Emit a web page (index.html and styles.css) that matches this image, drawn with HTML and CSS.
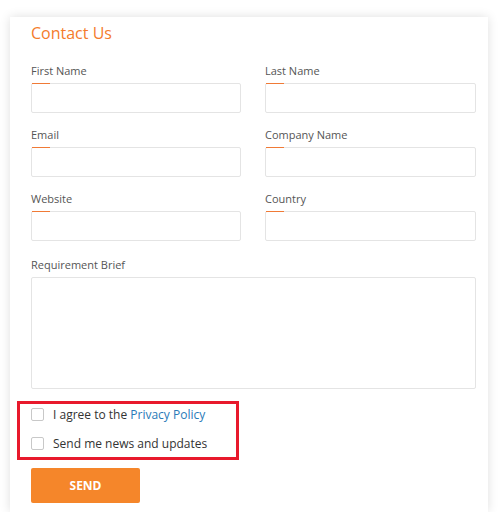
FILE: index.html
```html
<!DOCTYPE html>
<html lang="en">
<head>
    <meta charset="UTF-8">
    <meta name="viewport" content="width=device-width, initial-scale=1.0">
    <title>Contact Us</title>
    <link rel="stylesheet" href="styles.css">
</head>
<body>
    <div class="card">
        <h2 class="title">Contact Us</h2>
        <form class="form">
            <div class="grid">
                <div class="field">
                    <label>First Name</label>
                    <input type="text">
                </div>
                <div class="field">
                    <label>Last Name</label>
                    <input type="text">
                </div>
                <div class="field">
                    <label>Email</label>
                    <input type="text">
                </div>
                <div class="field">
                    <label>Company Name</label>
                    <input type="text">
                </div>
                <div class="field">
                    <label>Website</label>
                    <input type="text">
                </div>
                <div class="field">
                    <label>Country</label>
                    <input type="text">
                </div>
            </div>
            <div class="field brief">
                <label>Requirement Brief</label>
                <textarea></textarea>
            </div>
            <div class="consent">
                <label class="check"><span class="box"></span>I agree to the&nbsp;<a href="#">Privacy Policy</a></label>
                <label class="check"><span class="box"></span>Send me news and updates</label>
            </div>
            <button type="button" class="send">SEND</button>
        </form>
    </div>
</body>
</html>
```

FILE: styles.css
```css
* {
    box-sizing: border-box;
}
body {
    margin: 0;
    background: #fff;
    font-family: 'Open Sans', Arial, sans-serif;
    color: #555;
}
.card {
    width: 478px;
    margin: 17px 0 0 10px;
    padding: 4px 12px 9px 21px;
    background: #fff;
    box-shadow: 0 0 10px rgba(0, 0, 0, 0.13);
}
.title {
    margin: 0 0 18px;
    font-size: 16px;
    line-height: 24px;
    font-weight: 400;
    color: #f47c2c;
}
.grid {
    display: grid;
    grid-template-columns: 210px 211px;
    column-gap: 24px;
    row-gap: 14px;
}
.field {
    display: flex;
    flex-direction: column;
    position: relative;
}
.field label {
    font-size: 11px;
    line-height: 16px;
    color: #555;
    margin-bottom: 4px;
}
.field input,
.field textarea {
    display: block;
    width: 100%;
    height: 30px;
    border: 1px solid #e4e4e4;
    border-radius: 2px;
    background: #fff;
    outline: none;
    font-family: inherit;
}
.field::after {
    content: '';
    position: absolute;
    left: 1px;
    top: 20px;
    width: 18px;
    height: 1px;
    background: #f07a36;
}
.brief {
    margin-top: 16px;
}
.brief::after {
    display: none;
}
.field textarea {
    height: 112px;
    resize: none;
}
.consent {
    margin: 12px 0 0 -14px;
    width: 222px;
    border: 3px solid #e8192c;
    padding: 0 0 4px 11px;
    display: flex;
    flex-direction: column;
    gap: 9px;
}
.check {
    display: flex;
    align-items: center;
    height: 20px;
    font-size: 12px;
    color: #333;
}
.check a {
    color: #2a7ab8;
    text-decoration: none;
}
.box {
    width: 13px;
    height: 13px;
    border: 1px solid #c8c8c8;
    border-radius: 2px;
    margin-right: 9px;
    background: #fff;
}
.send {
    display: block;
    margin-top: 8px;
    width: 109px;
    height: 35px;
    border: none;
    border-radius: 2px;
    background: #f5862a;
    color: #fff;
    font-family: inherit;
    font-size: 12px;
    font-weight: 700;
    cursor: pointer;
}
```
